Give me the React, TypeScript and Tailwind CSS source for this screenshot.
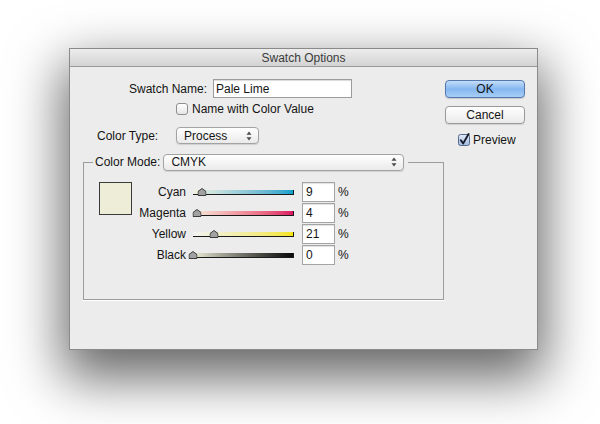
import React from "react";

const font = "font-['Liberation_Sans',Arial,sans-serif]";

function Arrows() {
    return (
        <svg width="6" height="10" viewBox="0 0 6 10" className="shrink-0">
            <path d="M3 0.5 L5.5 3.8 L0.5 3.8 Z" fill="#4a4a4a" />
            <path d="M3 9.5 L5.5 6.2 L0.5 6.2 Z" fill="#4a4a4a" />
        </svg>
    );
}

function Select({ label, className }: { label: string; className: string }) {
    return (
        <div className={`flex items-center justify-between h-[17px] rounded-[4px] border border-[#a3a3a3] bg-gradient-to-b from-white to-[#eaeaea] pl-[7px] pr-[6px] shadow-[0_1px_1px_rgba(0,0,0,0.12)] ${className}`}>
            <span className="leading-none">{label}</span>
            <Arrows />
        </div>
    );
}

function Thumb({ value }: { value: number }) {
    return (
        <svg
            width="9" height="8" viewBox="0 0 9 8"
            className="absolute top-[-2px] -translate-x-1/2"
            style={{ left: `${value}%` }}>
            <path d="M4.5 0.5 L8.5 3.5 L8.5 7.5 L0.5 7.5 L0.5 3.5 Z" fill="#a2a2a2" stroke="#3c3c3c" strokeWidth="1" />
        </svg>
    );
}

const channels = [
    { name: "Cyan", value: 9, track: "bg-gradient-to-r from-[#f0f2e0] to-[#00a1cc]" },
    { name: "Magenta", value: 4, track: "bg-gradient-to-r from-[#f3eadb] to-[#dc0f63]" },
    { name: "Yellow", value: 21, track: "bg-gradient-to-r from-[#f2f3f2] to-[#f6e400]" },
    { name: "Black", value: 0, track: "bg-gradient-to-r from-[#eeeed8] to-[#0a0a0a]" },
];

export default function App() {
    return (
        <div className={`w-[600px] h-[424px] bg-white pt-[48px] pl-[69px] text-[12px] text-[#141414] ${font}`}>
            <div className="w-[469px] h-[302px] bg-[#ececec] border border-[#8a8a8a] shadow-[0_22px_50px_6px_rgba(0,0,0,0.6)] flex flex-col">
                <div className="h-[18px] shrink-0 border-b border-[#9a9a9a] bg-gradient-to-b from-[#ededed] to-[#d3d3d3] flex items-center justify-center text-[#3a3a3a]">
                    Swatch Options
                </div>

                <div className="flex">
                    {/* left column */}
                    <div className="w-[375px] flex flex-col">
                        <div className="mt-[12px] flex items-center h-[19px]">
                            <span className="w-[137px] text-right">Swatch Name:</span>
                            <div className="ml-[6px] w-[139px] h-[19px] bg-white border border-[#9c9c9c] shadow-[inset_0_1px_1px_rgba(0,0,0,0.15)] flex items-center pl-[2px]">
                                Pale Lime
                            </div>
                        </div>

                        <div className="mt-[5px] ml-[106px] flex items-center h-[12px] gap-[4px]">
                            <div className="w-[12px] h-[12px] rounded-[3px] border border-[#8e8e8e] bg-gradient-to-b from-white to-[#e6e6e6]"></div>
                            <span>Name with Color Value</span>
                        </div>

                        <div className="mt-[12px] flex items-center h-[17px]">
                            <span className="w-[106px] pl-[27px]">Color Type:</span>
                            <Select label="Process" className="w-[83px]" />
                        </div>

                        <fieldset className="mt-[9px] ml-[13px] w-[361px] h-[147px] border border-[#9c9c9c] shadow-[0_1px_0_#ffffff] pt-[11px] pl-[15px]">
                            <legend className="-ml-[6px] px-[2px] pr-[4px]">
                                <div className="flex items-center gap-[3px]">
                                    <span>Color Mode:</span>
                                    <Select label="CMYK" className="w-[241px]" />
                                </div>
                            </legend>
                            <div className="flex">
                                <div className="w-[33px] h-[33px] border border-[#3a3a3a] bg-[#eeeed8] shrink-0"></div>
                                <div className="flex flex-col gap-[1px]">
                                    {channels.map(c => (
                                        <div key={c.name} className="flex items-center h-[20px]">
                                            <span className="w-[54px] text-right">{c.name}</span>
                                            <div className="ml-[7px] w-[101px] h-[5px] relative">
                                                <div className={`h-[5px] border-b border-r border-[#1a1a1a] ${c.track}`}></div>
                                                <Thumb value={c.value} />
                                            </div>
                                            <div className="ml-[8px] w-[33px] h-[20px] bg-white border border-[#a4a4a4] shadow-[inset_0_1px_1px_rgba(0,0,0,0.12)] flex items-center pl-[3px]">
                                                {c.value}
                                            </div>
                                            <span className="ml-[3px]">%</span>
                                        </div>
                                    ))}
                                </div>
                            </div>
                        </fieldset>
                    </div>

                    {/* right column */}
                    <div className="flex flex-col">
                        <button className="mt-[13px] w-[80px] h-[18px] rounded-[4px] border border-[#5477ad] bg-gradient-to-b from-[#c4def9] via-[#86b7f0] to-[#a6cdf8] flex items-center justify-center shadow-[0_1px_1px_rgba(0,0,0,0.15)]">
                            OK
                        </button>
                        <button className="mt-[8px] w-[80px] h-[18px] rounded-[4px] border border-[#9a9a9a] bg-gradient-to-b from-white to-[#eaeaea] flex items-center justify-center shadow-[0_1px_1px_rgba(0,0,0,0.12)]">
                            Cancel
                        </button>
                        <div className="mt-[7px] ml-[13px] flex items-center gap-[2px]">
                            <svg width="13" height="14" viewBox="0 0 13 14">
                                <defs>
                                    <linearGradient id="cb" x1="0" y1="0" x2="0" y2="1">
                                        <stop offset="0" stopColor="#e3ecf8" />
                                        <stop offset="1" stopColor="#9fb9df" />
                                    </linearGradient>
                                </defs>
                                <rect x="0.5" y="1.5" width="11" height="11" rx="2" fill="url(#cb)" stroke="#56698a" />
                                <path d="M2.8 7.2 L5.2 10.4 L10.6 1" fill="none" stroke="#141a28" strokeWidth="1.9" strokeLinecap="round" strokeLinejoin="round" />
                            </svg>
                            <span>Preview</span>
                        </div>
                    </div>
                </div>
            </div>
        </div>
    );
}
